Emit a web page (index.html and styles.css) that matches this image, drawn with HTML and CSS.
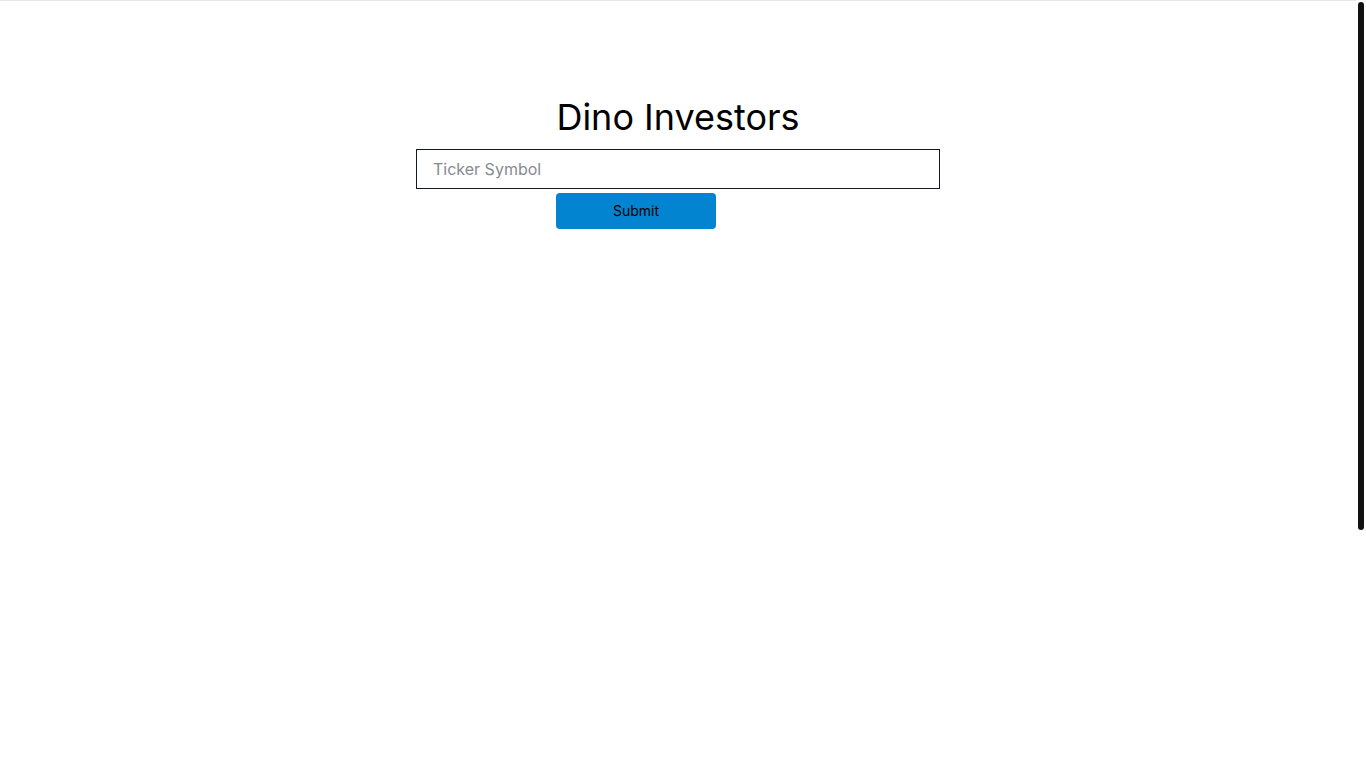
FILE: index.html
```html
<!DOCTYPE html>
<html lang="en">
<head>
    <meta charset="UTF-8">
    <meta name="viewport" content="width=device-width, initial-scale=1.0">
    <title>Dino Investors</title>
    <link rel="stylesheet" href="styles.css">
</head>
<body>
    <div class="page">
        <div class="search">
            <h1 class="title">Dino Investors</h1>
            <form class="ticker-form" onsubmit="return false;">
                <input type="text" class="ticker-input" placeholder="Ticker Symbol">
                <button type="submit" class="submit-btn">Submit</button>
            </form>
        </div>
    </div>
    <div class="scroll-thumb"></div>
</body>
</html>
```

FILE: styles.css
```css
body {
    margin: 0;
    font-family: Inter, "Noto Sans", sans-serif;
    color: #000;
    background: #fff;
}
.page {
    border-top: 1px solid #e5e7eb;
    margin-right: 10px;
}
.search {
    width: 524px;
    margin: 0 auto;
    padding-top: 94px;
}
.title {
    font-size: 36px;
    font-weight: 400;
    text-align: center;
    margin: 0 0 10px 0;
}
.ticker-form {
    display: flex;
    flex-direction: column;
    align-items: flex-start;
}
.ticker-input {
    box-sizing: border-box;
    width: 524px;
    height: 40px;
    border: 1px solid #111827;
    padding: 0 16px;
    font-family: Inter, sans-serif;
    font-size: 16px;
    outline: none;
}
.ticker-input::placeholder {
    color: #868a93;
}
.submit-btn {
    margin-top: 4px;
    margin-left: 140px;
    width: 160px;
    height: 36px;
    padding: 0 0 2px 0;
    background-color: #0284d0;
    border: none;
    border-radius: 4px;
    color: #000;
    font-family: Inter, sans-serif;
    font-size: 14px;
    cursor: pointer;
}
/* fake overlay scrollbar thumb */
.scroll-thumb {
    position: fixed;
    top: 2px;
    right: 2px;
    width: 6px;
    height: 528px;
    background-color: #111;
    border-radius: 3px;
}
```
